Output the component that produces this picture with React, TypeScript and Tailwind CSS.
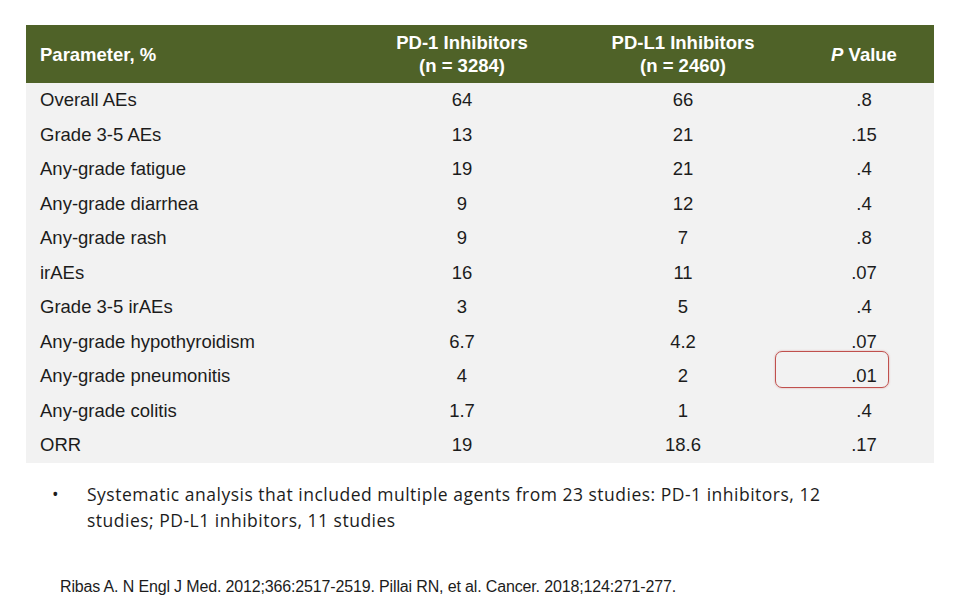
import React from "react";

const rows: [string, string, string, string][] = [
  ["Overall AEs", "64", "66", ".8"],
  ["Grade 3-5 AEs", "13", "21", ".15"],
  ["Any-grade fatigue", "19", "21", ".4"],
  ["Any-grade diarrhea", "9", "12", ".4"],
  ["Any-grade rash", "9", "7", ".8"],
  ["irAEs", "16", "11", ".07"],
  ["Grade 3-5 irAEs", "3", "5", ".4"],
  ["Any-grade hypothyroidism", "6.7", "4.2", ".07"],
  ["Any-grade pneumonitis", "4", "2", ".01"],
  ["Any-grade colitis", "1.7", "1", ".4"],
  ["ORR", "19", "18.6", ".17"],
];

export default function App() {
  return (
    <div className="w-[959px] h-[610px] bg-white overflow-hidden" style={{ fontFamily: '"Liberation Sans", Arial, sans-serif' }}>
      <div className="pt-[25px] pl-[26px]">
        <div className="relative w-[908px]">
          <div className="grid grid-cols-[326px_220px_222px_140px] h-[58px] bg-[#4f6228] text-white font-bold text-[18.5px] leading-[23px]">
            <div className="flex items-center pl-[14px]">Parameter, %</div>
            <div className="flex flex-col items-center justify-center text-center">
              <span>PD-1 Inhibitors</span>
              <span>(n = 3284)</span>
            </div>
            <div className="flex flex-col items-center justify-center text-center">
              <span>PD-L1 Inhibitors</span>
              <span>(n = 2460)</span>
            </div>
            <div className="flex items-center justify-center">
              <span><i>P</i> Value</span>
            </div>
          </div>
          <div className="bg-[#f2f2f2] text-[#1c1c1c] text-[18.5px]">
            {rows.map((r, i) => (
              <div key={i} className="grid grid-cols-[326px_220px_222px_140px] h-[34.5px] items-center">
                <div className="pl-[14px]">{r[0]}</div>
                <div className="text-center">{r[1]}</div>
                <div className="text-center">{r[2]}</div>
                <div className="text-center">{r[3]}</div>
              </div>
            ))}
          </div>
          <div className="absolute left-[749px] top-[326px] w-[114px] h-[37px] rounded-[7px] border border-[#c0504d] shadow-[0_0_2px_rgba(192,80,77,0.5)]" />
        </div>
      </div>
      <div className="mt-[18px] flex text-[#1c1c1c] text-[17.5px] leading-[26px]" style={{ fontFamily: '"Open Sans", sans-serif' }}>
        <div className="w-[87px] pl-[52px]">•</div>
        <div className="w-[800px] tracking-[0.5px]">
          Systematic analysis that included multiple agents from 23 studies: PD-1 inhibitors, 12
          <br />
          studies; PD-L1 inhibitors, 11 studies
        </div>
      </div>
      <div className="mt-[44px] pl-[60px] text-[16px] leading-[20px] text-[#1c1c1c] tracking-[-0.15px]">
        Ribas A. N Engl J Med. 2012;366:2517-2519. Pillai RN, et al. Cancer. 2018;124:271-277.
      </div>
    </div>
  );
}
